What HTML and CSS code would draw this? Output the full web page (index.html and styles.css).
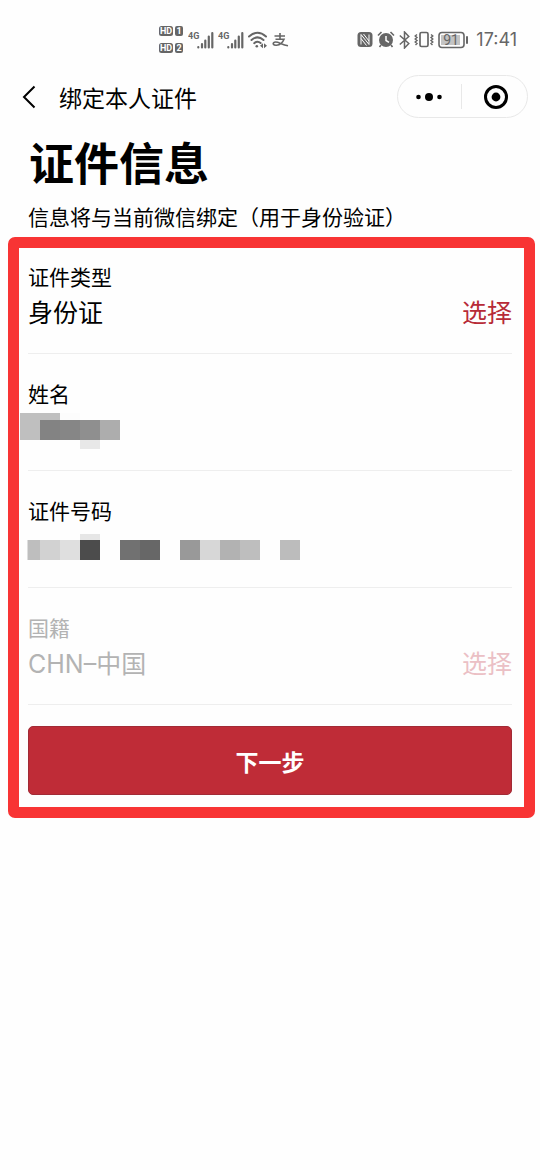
FILE: index.html
```html
<!DOCTYPE html>
<html lang="zh-CN">
<head>
<meta charset="utf-8">
<meta name="viewport" content="width=device-width, initial-scale=1">
<title>绑定本人证件</title>
<link rel="stylesheet" href="styles.css">
</head>
<body>
<div class="status-bar">
  <div class="status-group">
    <svg class="icon icon-hd" width="25" height="30" viewBox="0 0 25 30">
      <rect x="0" y="1" width="14" height="10" rx="2.5"/><rect x="16" y="1" width="8" height="10" rx="2"/>
      <rect x="0" y="18" width="14" height="10" rx="2.5"/><rect x="16" y="18" width="8" height="10" rx="2"/>
      <g class="badge-text"><text x="7" y="9">HD</text><text x="20" y="9">1</text><text x="7" y="26">HD</text><text x="20" y="26">2</text></g>
    </svg>
    <svg class="icon icon-signal" width="26" height="20" viewBox="0 0 26 20">
      <text class="net-text" x="0" y="9">4G</text>
      <path class="line" stroke-width="2.2" stroke-linecap="round" d="M10.3 17.2v.3M14 14.2v3.3M17.3 10.5v7M20.8 6.5v11M24.3 3v14.5"/>
    </svg>
    <svg class="icon icon-signal" width="26" height="20" viewBox="0 0 26 20">
      <text class="net-text" x="0" y="9">4G</text>
      <path class="line" stroke-width="2.2" stroke-linecap="round" d="M10.3 17.2v.3M14 14.2v3.3M17.3 10.5v7M20.8 6.5v11M24.3 3v14.5"/>
    </svg>
    <svg class="icon icon-wifi" width="20" height="18" viewBox="0 0 20 18">
      <path class="line" stroke-width="2" stroke-linecap="round" d="M1 5.5q8.5-7.5 17 0M3.5 9q6-5.200 12 0M6.2 12.2q3.3-2.8 6.4-.2"/>
      <circle cx="8.8" cy="15.2" r="1.300"/><path d="M15 12.200v5l-3-2.500zM16 12.200v5l3-2.500z"/>
    </svg>
    <svg class="icon icon-pay" width="17" height="16" viewBox="0 0 17 16">
      <path class="line" stroke-width="1.600" d="M2.500 4h10.500M8 1v6M3.500 7.200h8.500C10.500 11 8 13 4.500 13.300 1 13.500.2 11 2.500 10.200 6 9.200 9 12.500 16 13.800"/>
    </svg>
  </div>
  <div class="status-group">
    <svg class="icon icon-nfc" width="16" height="17" viewBox="0 0 16 17">
      <rect x=".5" y="1" width="15" height="15" rx="3.500"/>
      <path class="cut" d="M4 13.500V3.500l8 10V3.500M6.500 3l5.500 7M4 7.500l5.500 7"/>
    </svg>
    <svg class="icon icon-alarm" width="18" height="17" viewBox="0 0 18 17">
      <circle cx="9" cy="9" r="7"/><path class="line" stroke-width="1.600" d="M1 4.500L4.500 1M17 4.500L13.500 1M4 14l-1.500 2M14 14l1.500 2"/><path class="cut" d="M9 5v4.500l3 1.800"/>
    </svg>
    <svg class="icon icon-bt" width="11" height="18" viewBox="0 0 11 18">
      <path class="line" stroke-width="1.500" d="M.8 4.500l9 8L5.500 17V1l4.300 4.500-9 8"/>
    </svg>
    <svg class="icon icon-vibrate" width="20" height="17" viewBox="0 0 20 17">
      <rect class="line" x="6" y="1.500" width="8" height="14" rx="1.500" stroke-width="1.700"/>
      <path class="line" stroke-width="1.400" d="M3 3.500L1.200 5 3 6.500 1.200 8 3 9.500 1.200 11 3 12.500 1.500 14M17 3.500L18.800 5 17 6.500 18.800 8 17 9.500 18.800 11 17 12.500 18.500 14"/>
    </svg>
    <svg class="icon icon-battery" width="31" height="18" viewBox="0 0 31 18">
      <rect class="line" x="1" y="1.500" width="25" height="15" rx="3" stroke-width="1.600"/>
      <rect class="charge" x="3" y="4" width="19" height="10"/>
      <rect x="28" y="5" width="2" height="8" rx="1"/>
      <text class="battery-text" x="13" y="14">91</text>
    </svg>
    <span class="clock">17:41</span>
  </div>
</div>

<header class="nav-bar">
  <button class="back" type="button" aria-label="返回">
    <svg width="14" height="24" viewBox="0 0 14 24"><path d="M12.500 1.500L2 12l10.500 10.500"/></svg>
  </button>
  <span class="nav-title">绑定本人证件</span>
  <div class="capsule">
    <button type="button" aria-label="更多">
      <svg width="26" height="10" viewBox="0 0 26 10"><circle cx="2.500" cy="5" r="2.300"/><circle cx="13" cy="5" r="4"/><circle cx="23.500" cy="5" r="2.300"/></svg>
    </button>
    <button type="button" aria-label="关闭">
      <svg width="24" height="24" viewBox="0 0 24 24"><circle class="ring" cx="12" cy="12" r="10.500"/><circle cx="12" cy="12" r="4.400"/></svg>
    </button>
  </div>
</header>

<main>
  <h1 class="title">证件信息</h1>
  <p class="subtitle">信息将与当前微信绑定（用于身份验证）</p>

  <form class="card">
    <div class="row">
      <span class="label">证件类型</span>
      <div class="line-box"><span>身份证</span><button class="choose" type="button">选择</button></div>
    </div>
    <div class="row">
      <label class="label" for="name">姓名</label>
      <div class="line-box">
        <input class="field" id="name" type="text" readonly>
        <svg class="mosaic" width="290" height="40" viewBox="0 0 290 40">
          <path fill="#bfbfbf" d="M0 3h40v7H20v20H0z"/><path fill="#fcfcfc" d="M40 3h20v7H40z"/>
          <path fill="#838383" d="M20 10h20v20H20z"/><path fill="#868686" d="M40 10h20v20H40z"/><path fill="#8f8f8f" d="M60 10h20v20H60z"/><path fill="#adadad" d="M80 10h20v20H80z"/>
          <path fill="#e8e8e8" d="M60 30h20v9H60z"/>
        </svg>
      </div>
    </div>
    <div class="row">
      <label class="label" for="number">证件号码</label>
      <div class="line-box">
        <input class="field" id="number" type="text" readonly>
        <svg class="mosaic" width="290" height="40" viewBox="0 0 290 40">
          <path fill="#bebebe" d="M7.500 13H20v20H7.500z"/><path fill="#d2d2d2" d="M20 13h20v20H20z"/><path fill="#dfdfdf" d="M40 13h20v20H40z"/>
          <path fill="#e6e6e6" d="M60 7h20v6H60z"/><path fill="#4c4c4c" d="M60 13h20v20H60z"/>
          <path fill="#717171" d="M100 13h20v20h-20z"/><path fill="#676767" d="M120 13h20v20h-20z"/>
          <path fill="#999" d="M160 13h20v20h-20z"/><path fill="#d7d7d7" d="M180 13h20v20h-20z"/><path fill="#b2b2b2" d="M200 13h20v20h-20z"/><path fill="#bebebe" d="M220 13h20v20h-20z"/>
          <path fill="#bcbcbc" d="M260 13h20v20h-20z"/>
        </svg>
      </div>
    </div>
    <div class="row row-disabled">
      <span class="label">国籍</span>
      <div class="line-box"><span>CHN–中国</span><button class="choose" type="button" disabled>选择</button></div>
    </div>
    <button class="submit" type="button">下一步</button>
  </form>
</main>
</body>
</html>
```
FILE: styles.css
```css
* { box-sizing: border-box; }

body {
  margin: 0;
  background: #fefefe;
  color: #000;
  font-family: "Noto Sans CJK SC", sans-serif;
}

button {
  padding: 0;
  border: 0;
  background: none;
  font-family: inherit;
  color: inherit;
}

svg { display: block; flex: none; }

.status-bar {
  display: flex;
  justify-content: space-between;
  height: 75px;
  padding: 4px 23px 0 159px;
}

.status-group { display: flex; align-items: center; gap: 4px; }

.icon { fill: #666; color: #666; }
.icon .line { fill: none; stroke: #666; }
.icon .cut { fill: none; stroke: #fefefe; stroke-width: 1.5; }
.icon-nfc .cut { stroke-width: 1; }
.icon .charge { fill: #c4c4c4; }

.badge-text {
  fill: #fff;
  font: bold 9px "Liberation Sans Narrow", Roboto, sans-serif;
  text-anchor: middle;
}
.net-text { font: bold 9px "Liberation Sans Narrow", Roboto, sans-serif; }
.battery-text { font: 14px Roboto, sans-serif; text-anchor: middle; }
.clock { margin-left: 3px; color: #666; font: 18px/20px Inter, sans-serif; }

.nav-bar {
  display: flex;
  align-items: center;
  height: 43px;
  padding: 0 12px 0 22px;
}
.back path { fill: none; stroke: #000; stroke-width: 2; }
.nav-title { margin-left: 23px; font-size: 23px; line-height: 32px; }

.capsule {
  display: flex;
  width: 131px;
  height: 43px;
  margin-left: auto;
  border: 1px solid #e8e8e8;
  border-radius: 22px;
}
.capsule button {
  display: flex;
  flex: 1;
  align-items: center;
  justify-content: center;
  position: relative;
}
.capsule button + button { padding-left: 4px; }
.capsule button + button::before {
  content: "";
  position: absolute;
  left: 0;
  top: 8px;
  bottom: 8px;
  width: 1px;
  background: #e8e8e8;
}
.capsule .ring { fill: none; stroke: #000; stroke-width: 3; }

.title {
  margin: 14px 29px 0;
  font-size: 45px;
  line-height: 60px;
  font-weight: 700;
}
.subtitle {
  margin: 9px 28px 6px;
  font-size: 21px;
  line-height: 30px;
}

.card {
  margin: 0 5px 0 8px;
  padding: 0 12px 12px 9px;
  border: 11px solid #f83434;
  border-radius: 7px;
}
.row {
  padding: 24px 0 20px;
  border-bottom: 1px solid #eee;
}
.row:first-child { padding-top: 13px; }
.label { display: block; font-size: 21px; line-height: 30px; }
.line-box {
  display: flex;
  align-items: center;
  justify-content: space-between;
  position: relative;
  height: 40px;
  margin-top: 2px;
  font-family: Inter, "Noto Sans CJK SC", sans-serif;
  font-size: 25px;
  line-height: 40px;
}
.field {
  width: 100%;
  height: 40px;
  padding: 0;
  border: 0;
  outline: 0;
  background: none;
  font: inherit;
}
.mosaic { position: absolute; left: -8px; top: 0; }
.choose {
  color: #b72b37;
  font-family: inherit;
  font-size: 25px;
  line-height: 40px;
}
.row-disabled { color: #b3b3b3; }
.row-disabled .choose { color: #ebc0c5; }

.submit {
  display: block;
  width: 100%;
  height: 69px;
  margin-top: 21px;
  border: 1px solid #a12b36;
  border-radius: 5px;
  background: #bf2c37;
  color: #fff;
  font-size: 23px;
  font-weight: 700;
}
```
